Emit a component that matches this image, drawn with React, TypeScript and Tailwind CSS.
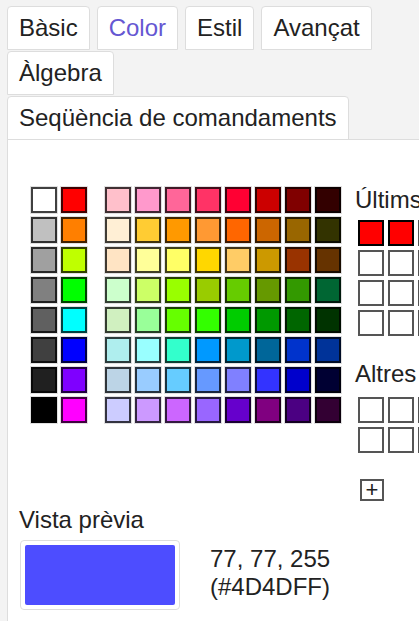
import React from 'react';

// Colour chooser panel: tabs on top, swatch grids, recent/other slots and a preview

const TABS = ['Bàsic', 'Color', 'Estil', 'Avançat', 'Àlgebra', 'Seqüència de comandaments'];

const GRAYS = ['#FFFFFF', '#C0C0C0', '#A0A0A0', '#808080', '#606060', '#404040', '#202020', '#000000'];
const PRIMARIES = ['#FF0000', '#FF7F00', '#BFFF00', '#00FF00', '#00FFFF', '#0000FF', '#7F00FF', '#FF00FF'];

const PALETTE = [
  ['#FFC0CB', '#FF99CC', '#FF6699', '#FF3366', '#FF0033', '#CC0000', '#800000', '#330000'],
  ['#FFEFD5', '#FFCC33', '#FF9900', '#FF9933', '#FF6600', '#CC6600', '#996600', '#333300'],
  ['#FFE4C4', '#FFFF99', '#FFFF66', '#FFD700', '#FFCC66', '#CC9900', '#993300', '#663300'],
  ['#CCFFCC', '#CCFF66', '#99FF00', '#99CC00', '#66CC00', '#669900', '#339900', '#006633'],
  ['#D0F0C0', '#99FF99', '#66FF00', '#33FF00', '#00CC00', '#009900', '#006600', '#003300'],
  ['#AFEEEE', '#99FFFF', '#33FFCC', '#0099FF', '#0099CC', '#006699', '#0033CC', '#003399'],
  ['#BCD4E6', '#99CCFF', '#66CCFF', '#6699FF', '#8080FF', '#3333FF', '#0000CC', '#000033'],
  ['#CCCCFF', '#CC99FF', '#CC66FF', '#9966FF', '#6600CC', '#800080', '#4B0082', '#330033'],
];

function Swatch({ color }: { color: string }) {
  return (
    <div
      className="w-[26px] h-[26px] border-2 border-black/75 shadow-[0_0_0_1px_rgba(0,0,0,0.12)]"
      style={{ backgroundColor: color }}
    />
  );
}

function Slot({ color }: { color?: string }) {
  return color ? (
    <div className="w-[26px] h-[26px] border-2 border-black bg-[#FF0000]" />
  ) : (
    <div className="w-[26px] h-[26px] border-2 border-[#555] bg-white" />
  );
}

export default function App() {
  const left = GRAYS.flatMap((g, i) => [g, PRIMARIES[i]]);
  const main = PALETTE.flat();

  return (
    <div
      className="w-full h-screen overflow-hidden bg-[#f3f3f3] flex flex-col pt-[6px] pl-[7px] text-[24px] leading-[28px] text-[#222]"
      style={{ fontFamily: '"Liberation Sans", Arial, sans-serif' }}
    >
      {/* Tabs */}
      <div className="flex flex-wrap gap-x-[7px] gap-y-px pr-[40px]">
        {TABS.map((t) => (
          <div
            key={t}
            className={`h-[44px] px-[11px] flex items-center bg-white border border-[#ddd] rounded-t-[4px] whitespace-nowrap ${
              t === 'Color' ? 'text-[#6557D2]' : 'text-[#222]'
            }`}
          >
            {t}
          </div>
        ))}
      </div>

      {/* Panel */}
      <div className="flex-1 -mt-px bg-white border-l border-t border-[#ddd] flex flex-col">
        <div className="flex items-start pt-[47px] pl-[23px]">
          <div className="grid grid-cols-2 gap-[4px] shrink-0">
            {left.map((c, i) => (
              <Swatch key={i} color={c} />
            ))}
          </div>
          <div className="grid grid-cols-8 gap-[4px] ml-[18px] shrink-0">
            {main.map((c, i) => (
              <Swatch key={i} color={c} />
            ))}
          </div>

          <div className="ml-[14px] shrink-0 flex flex-col -mt-[1px]">
            <div className="text-[#222]">Últims</div>
            <div className="grid grid-cols-3 gap-[4px] ml-[3px] mt-[6px] w-[86px]">
              {Array.from({ length: 12 }).map((_, i) => (
                <Slot key={i} color={i < 2 ? 'red' : undefined} />
              ))}
            </div>
            <div className="mt-[24px] text-[#222]">Altres</div>
            <div className="grid grid-cols-3 gap-[4px] ml-[3px] mt-[9px] w-[86px]">
              {Array.from({ length: 6 }).map((_, i) => (
                <Slot key={i} />
              ))}
            </div>
            <div className="mt-[26px] ml-[5px] w-[24px] h-[22px] border-2 border-[#555] flex items-center justify-center text-[22px] leading-none text-[#222]">
              +
            </div>
          </div>
        </div>

        {/* Preview */}
        <div className="pl-[11px] mt-[5px]">
          <div>Vista prèvia</div>
          <div className="flex items-center mt-[6px]">
            <div className="ml-px w-[160px] h-[70px] border border-[#ddd] rounded-[4px] p-[4px]">
              <div className="w-full h-full rounded-[2px] bg-[#4D4DFF]" />
            </div>
            <div className="ml-[30px] -mt-[4px] text-[#222]">
              <div>77, 77, 255</div>
              <div>(#4D4DFF)</div>
            </div>
          </div>
        </div>
      </div>
    </div>
  );
}
